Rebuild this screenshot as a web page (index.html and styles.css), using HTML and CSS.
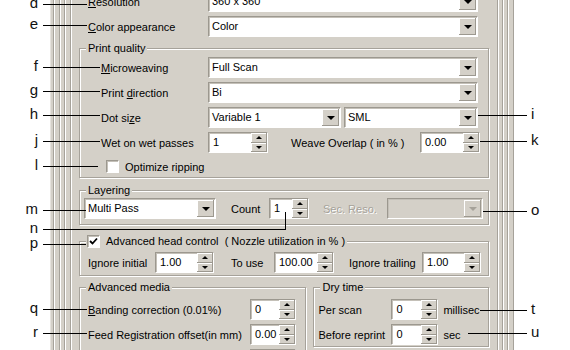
FILE: index.html
```html
<!DOCTYPE html>
<html lang="en">
<head>
    <meta charset="UTF-8">
    <title>Print settings</title>
    <link rel="stylesheet" href="styles.css">
</head>
<body>
<div class="sheet">
    <div class="dialog">
    <div class="edge"><div class="edge e2"><div class="edge e3"><div class="edge e4">
    <div class="page">

        <div class="top-rows">
            <div class="row">
                <label class="lbl w120"><u>R</u>esolution</label>
                <div class="combo w270"><span class="val">360 x 360</span><span class="drop"></span></div>
            </div>
            <div class="row">
                <label class="lbl w120"><u>C</u>olor appearance</label>
                <div class="combo w270"><span class="val">Color</span><span class="drop"></span></div>
            </div>
        </div>

        <fieldset class="group quality">
            <legend>Print quality</legend>
            <div class="body">
                <div class="row">
                    <label class="lbl w107"><u>M</u>icroweaving</label>
                    <div class="combo w270"><span class="val">Full Scan</span><span class="drop"></span></div>
                </div>
                <div class="row">
                    <label class="lbl w107">Print <u>d</u>irection</label>
                    <div class="combo w270"><span class="val">Bi</span><span class="drop"></span></div>
                </div>
                <div class="row">
                    <label class="lbl w107">Dot si<u>z</u>e</label>
                    <div class="combo w133"><span class="val">Variable 1</span><span class="drop"></span></div>
                    <div class="combo w134 gap3"><span class="val">SML</span><span class="drop"></span></div>
                </div>
                <div class="row">
                    <label class="lbl w107">Wet on wet passes</label>
                    <div class="spin w60"><span class="val">1</span><span class="arrows"><i class="up"></i><i class="down"></i></span></div>
                    <label class="lbl w129 ml23">Weave Overlap ( in % )</label>
                    <div class="spin w60"><span class="val">0.00</span><span class="arrows"><i class="up"></i><i class="down"></i></span></div>
                </div>
                <div class="check-row">
                    <span class="check"></span>
                    <span class="check-text">Optimize ripping</span>
                </div>
            </div>
        </fieldset>

        <fieldset class="group layering">
            <legend>Layering</legend>
            <div class="body">
                <div class="row">
                    <div class="combo w132"><span class="val">Multi Pass</span><span class="drop"></span></div>
                    <label class="lbl w38 ml15">Count</label>
                    <div class="spin w40"><span class="val">1</span><span class="arrows"><i class="up"></i><i class="down"></i></span></div>
                    <label class="lbl w64 ml14 disabled">Sec. Reso.</label>
                    <div class="combo w96 off"><span class="val"></span><span class="drop"></span></div>
                </div>
            </div>
        </fieldset>

        <fieldset class="group head">
            <legend><span class="check on"><svg width="9" height="9" viewBox="0 0 9 9"><polyline points="1,4 3.5,6.5 8,1.5" fill="none" stroke="#000" stroke-width="1.8"/></svg></span><span class="legend-text">Advanced head control &nbsp;( Nozzle utilization in % )</span></legend>
            <div class="body">
                <div class="row">
                    <label class="lbl w67">Ignore initial</label>
                    <div class="spin w59"><span class="val">1.00</span><span class="arrows"><i class="up"></i><i class="down"></i></span></div>
                    <label class="lbl w43 ml17">To use</label>
                    <div class="spin w60"><span class="val">100.00</span><span class="arrows"><i class="up"></i><i class="down"></i></span></div>
                    <label class="lbl w73 ml15">Ignore trailing</label>
                    <div class="spin w59"><span class="val">1.00</span><span class="arrows"><i class="up"></i><i class="down"></i></span></div>
                </div>
            </div>
        </fieldset>

        <div class="pair">
            <fieldset class="group media">
                <legend>Advanced media</legend>
                <div class="body">
                    <div class="row">
                        <label class="lbl w162"><u>B</u>anding correction (0.01%)</label>
                        <div class="spin w46"><span class="val">0</span><span class="arrows"><i class="up"></i><i class="down"></i></span></div>
                    </div>
                    <div class="row">
                        <label class="lbl w162">Feed Registration offset(in mm)</label>
                        <div class="spin w46"><span class="val">0.00</span><span class="arrows"><i class="up"></i><i class="down"></i></span></div>
                    </div>
                    <div class="row">
                        <label class="lbl w162"></label>
                        <div class="spin w46"><span class="val"></span><span class="arrows"><i class="up"></i><i class="down"></i></span></div>
                    </div>
                </div>
            </fieldset>
            <fieldset class="group dry">
                <legend>Dry time</legend>
                <div class="body">
                    <div class="row">
                        <label class="lbl w73">Per scan</label>
                        <div class="spin w47"><span class="val">0</span><span class="arrows"><i class="up"></i><i class="down"></i></span></div>
                        <span class="unit">millisec</span>
                    </div>
                    <div class="row">
                        <label class="lbl w73">Before reprint</label>
                        <div class="spin w47"><span class="val">0</span><span class="arrows"><i class="up"></i><i class="down"></i></span></div>
                        <span class="unit">sec</span>
                    </div>
                </div>
            </fieldset>
        </div>

    </div>
    </div></div></div></div>
    </div>

    <!-- callout letters and leader lines over the screenshot -->
    <div class="callout left c-d"><span class="tag">d</span><i class="lead"></i></div>
    <div class="callout left c-e"><span class="tag">e</span><i class="lead"></i></div>
    <div class="callout left c-f"><span class="tag">f</span><i class="lead"></i></div>
    <div class="callout left c-g"><span class="tag">g</span><i class="lead"></i></div>
    <div class="callout left c-h"><span class="tag">h</span><i class="lead"></i></div>
    <div class="callout left c-j"><span class="tag">j</span><i class="lead"></i></div>
    <div class="callout left c-l"><span class="tag">l</span><i class="lead"></i></div>
    <div class="callout left c-m"><span class="tag">m</span><i class="lead"></i></div>
    <div class="callout left c-n"><span class="tag">n</span><i class="lead"></i><i class="riser"></i></div>
    <div class="callout left c-p"><span class="tag">p</span><i class="lead"></i></div>
    <div class="callout left c-q"><span class="tag">q</span><i class="lead"></i></div>
    <div class="callout left c-r"><span class="tag">r</span><i class="lead"></i></div>

    <div class="callout right c-i"><i class="lead"></i><span class="tag">i</span></div>
    <div class="callout right c-k"><i class="lead"></i><span class="tag">k</span></div>
    <div class="callout right c-o"><i class="lead"></i><span class="tag">o</span></div>
    <div class="callout right c-t"><i class="lead"></i><span class="tag">t</span></div>
    <div class="callout right c-u"><i class="lead"></i><span class="tag">u</span></div>
</div>
</body>
</html>
```

FILE: styles.css
```css
* {
    box-sizing: border-box;
}
html, body {
    margin: 0;
    background: #fff;
}
body {
    font-family: "Liberation Sans", Arial, sans-serif;
    font-size: 11px;
    color: #000;
}
.sheet {
    position: relative;
    width: 570px;
    height: 350px;
    overflow: hidden;
}

/* dialog + nested frames */
.dialog {
    margin: -9px 0 0 50px;
    width: 465px;
    padding: 0 1px 0 2px;
    background: #d4d0c8;
    border-left: 1px solid #e6e3de;
}
.edge {
    border-left: 1px solid #a6a29a;
    border-right: 1px solid #a6a29a;
    box-shadow: inset 1px 0 #fff, 1px 0 #fff;
    padding: 0 5px;
}
.e2 {
    padding: 0 4px;
}
.e3 {
    padding: 0 4px 0 5px;
}
.e4 {
    padding: 0;
}
.page {
    padding: 0 8px 40px;
}

/* rows and labels */
.top-rows {
    display: flex;
    flex-direction: column;
    gap: 4px;
    padding-left: 9px;
}
.row {
    display: flex;
    align-items: center;
    height: 21px;
    flex-shrink: 0;
}
.lbl {
    white-space: nowrap;
    flex-shrink: 0;
}
.lbl u {
    text-decoration: underline;
    text-underline-offset: 1px;
}
.disabled {
    color: #a6a29a;
    text-shadow: 1px 1px #fff;
}
.unit {
    margin-left: 5px;
}

.w38 { width: 38px; }
.w40 { width: 40px; }
.w43 { width: 43px; }
.w46 { width: 46px; }
.w47 { width: 47px; }
.w59 { width: 59px; }
.w60 { width: 60px; }
.w64 { width: 64px; }
.w67 { width: 67px; }
.w73 { width: 73px; }
.w96 { width: 96px; }
.w107 { width: 107px; }
.w120 { width: 120px; }
.w129 { width: 129px; }
.w132 { width: 132px; }
.w133 { width: 133px; }
.w134 { width: 134px; }
.w162 { width: 162px; }
.w270 { width: 270px; }
.ml14 { margin-left: 14px; }
.ml15 { margin-left: 15px; }
.ml17 { margin-left: 17px; }
.ml23 { margin-left: 23px; }
.gap3 { margin-left: 3px; }

/* combo box */
.combo, .spin {
    display: flex;
    height: 21px;
    flex-shrink: 0;
    background: #fff;
    border: 1px solid;
    border-color: #9c988f #fff #fff #9c988f;
    box-shadow: inset 1px 1px #c4c0b8;
}
.combo .val, .spin .val {
    flex: 1;
    padding: 0 3px 0 3px;
    line-height: 19px;
    white-space: nowrap;
    overflow: hidden;
}
.spin .val {
    padding-left: 4px;
}
.drop {
    width: 17px;
    margin: 1px 1px 1px 0;
    background: #d4d0c8;
    box-shadow: inset -1px -1px #9c988f, inset 1px 1px #fff;
    display: flex;
    align-items: center;
    justify-content: center;
}
.drop::after {
    content: "";
    border-top: 4px solid #000;
    border-left: 4px solid transparent;
    border-right: 4px solid transparent;
    margin-top: 1px;
}
.combo.off {
    background: #d4d0c8;
}
.combo.off .drop::after {
    border-top-color: #a6a29a;
}

/* spin buttons */
.arrows {
    width: 16px;
    display: flex;
    flex-direction: column;
    background: #d4d0c8;
}
.arrows i {
    flex: 1;
    display: flex;
    align-items: center;
    justify-content: center;
    box-shadow: inset -1px -1px #9c988f, inset 1px 1px #fff;
}
.arrows .up::after {
    content: "";
    border-bottom: 3px solid #000;
    border-left: 3px solid transparent;
    border-right: 3px solid transparent;
}
.arrows .down::after {
    content: "";
    border-top: 3px solid #000;
    border-left: 3px solid transparent;
    border-right: 3px solid transparent;
}

/* check boxes */
.check {
    display: inline-flex;
    align-items: center;
    justify-content: center;
    width: 13px;
    height: 13px;
    background: #fff;
    border: 1px solid;
    border-color: #9c988f #fff #fff #9c988f;
    box-shadow: inset 1px 1px #c4c0b8;
    vertical-align: top;
    flex-shrink: 0;
}
.check-row {
    display: flex;
    align-items: center;
    height: 13px;
    margin-top: 3px;
    padding-left: 5px;
}
.check-text {
    margin-left: 6px;
}

/* group boxes */
.group {
    margin: 0;
    padding: 0;
    min-width: 0;
    border: 1px solid #a6a29a;
    box-shadow: inset 1px 1px #fff, 1px 1px #fff;
}
.group legend {
    margin-left: 6px;
    padding: 0 2px;
    height: 13px;
    line-height: 13px;
    background: #d4d0c8;
}
.group .body {
    display: flex;
    flex-direction: column;
    gap: 4px;
}
.quality {
    margin-top: 5px;
}
.quality .body {
    padding: 2px 10px 4px 21px;
}
.layering {
    margin-top: 6px;
}
.layering .body {
    padding: 1px 4px 5px 4px;
}
.head {
    margin-top: 10px;
}
.head legend {
    padding: 0 2px 0 1px;
    display: flex;
    align-items: center;
}
.legend-text {
    margin-left: 6px;
}
.head .body {
    padding: 4px 4px 2px 8px;
}
.pair {
    display: flex;
    align-items: flex-start;
    gap: 7px;
    margin-top: 5px;
}
.media {
    width: 228px;
}
.media .body {
    padding: 5px 4px 4px 8px;
}
.dry {
    width: 176px;
}
.dry .body {
    padding: 5px 4px 1px 4px;
}

/* callouts */
.callout {
    position: absolute;
    display: flex;
    align-items: center;
    height: 18px;
}
.callout .tag {
    font-size: 15px;
    line-height: 18px;
    color: #111;
    margin-top: -2px;
}
.callout .lead {
    flex: 1;
    height: 1px;
    background: #000;
}
.callout.left {
    left: 20px;
}
.callout.left .tag {
    width: 18px;
    text-align: right;
}
.callout.left .lead {
    margin-left: 5px;
}
.callout.right .tag {
    width: 14px;
    margin-left: 4px;
}
.riser {
    position: absolute;
    right: 0;
    top: -8px;
    width: 1px;
    height: 17px;
    background: #000;
}

.c-d { top: -5px; width: 67px; }
.c-e { top: 16px; width: 67px; }
.c-f { top: 58px; width: 80px; }
.c-g { top: 82px; width: 80px; }
.c-h { top: 106px; width: 80px; }
.c-j { top: 132px; width: 80px; }
.c-l { top: 157px; width: 78px; }
.c-m { top: 201px; width: 66px; }
.c-m .lead { margin-left: 2px; }
.c-n { top: 220px; width: 266px; }
.c-n .lead { margin-left: 3px; }
.c-p { top: 235px; width: 66px; }
.c-q { top: 300px; width: 67px; }
.c-r { top: 324px; width: 67px; }

.c-i { top: 106px; left: 478px; width: 67px; }
.c-k { top: 132px; left: 480px; width: 65px; }
.c-o { top: 202px; left: 483px; width: 62px; }
.c-t { top: 301px; left: 480px; width: 65px; }
.c-u { top: 324px; left: 468px; width: 77px; }
```
